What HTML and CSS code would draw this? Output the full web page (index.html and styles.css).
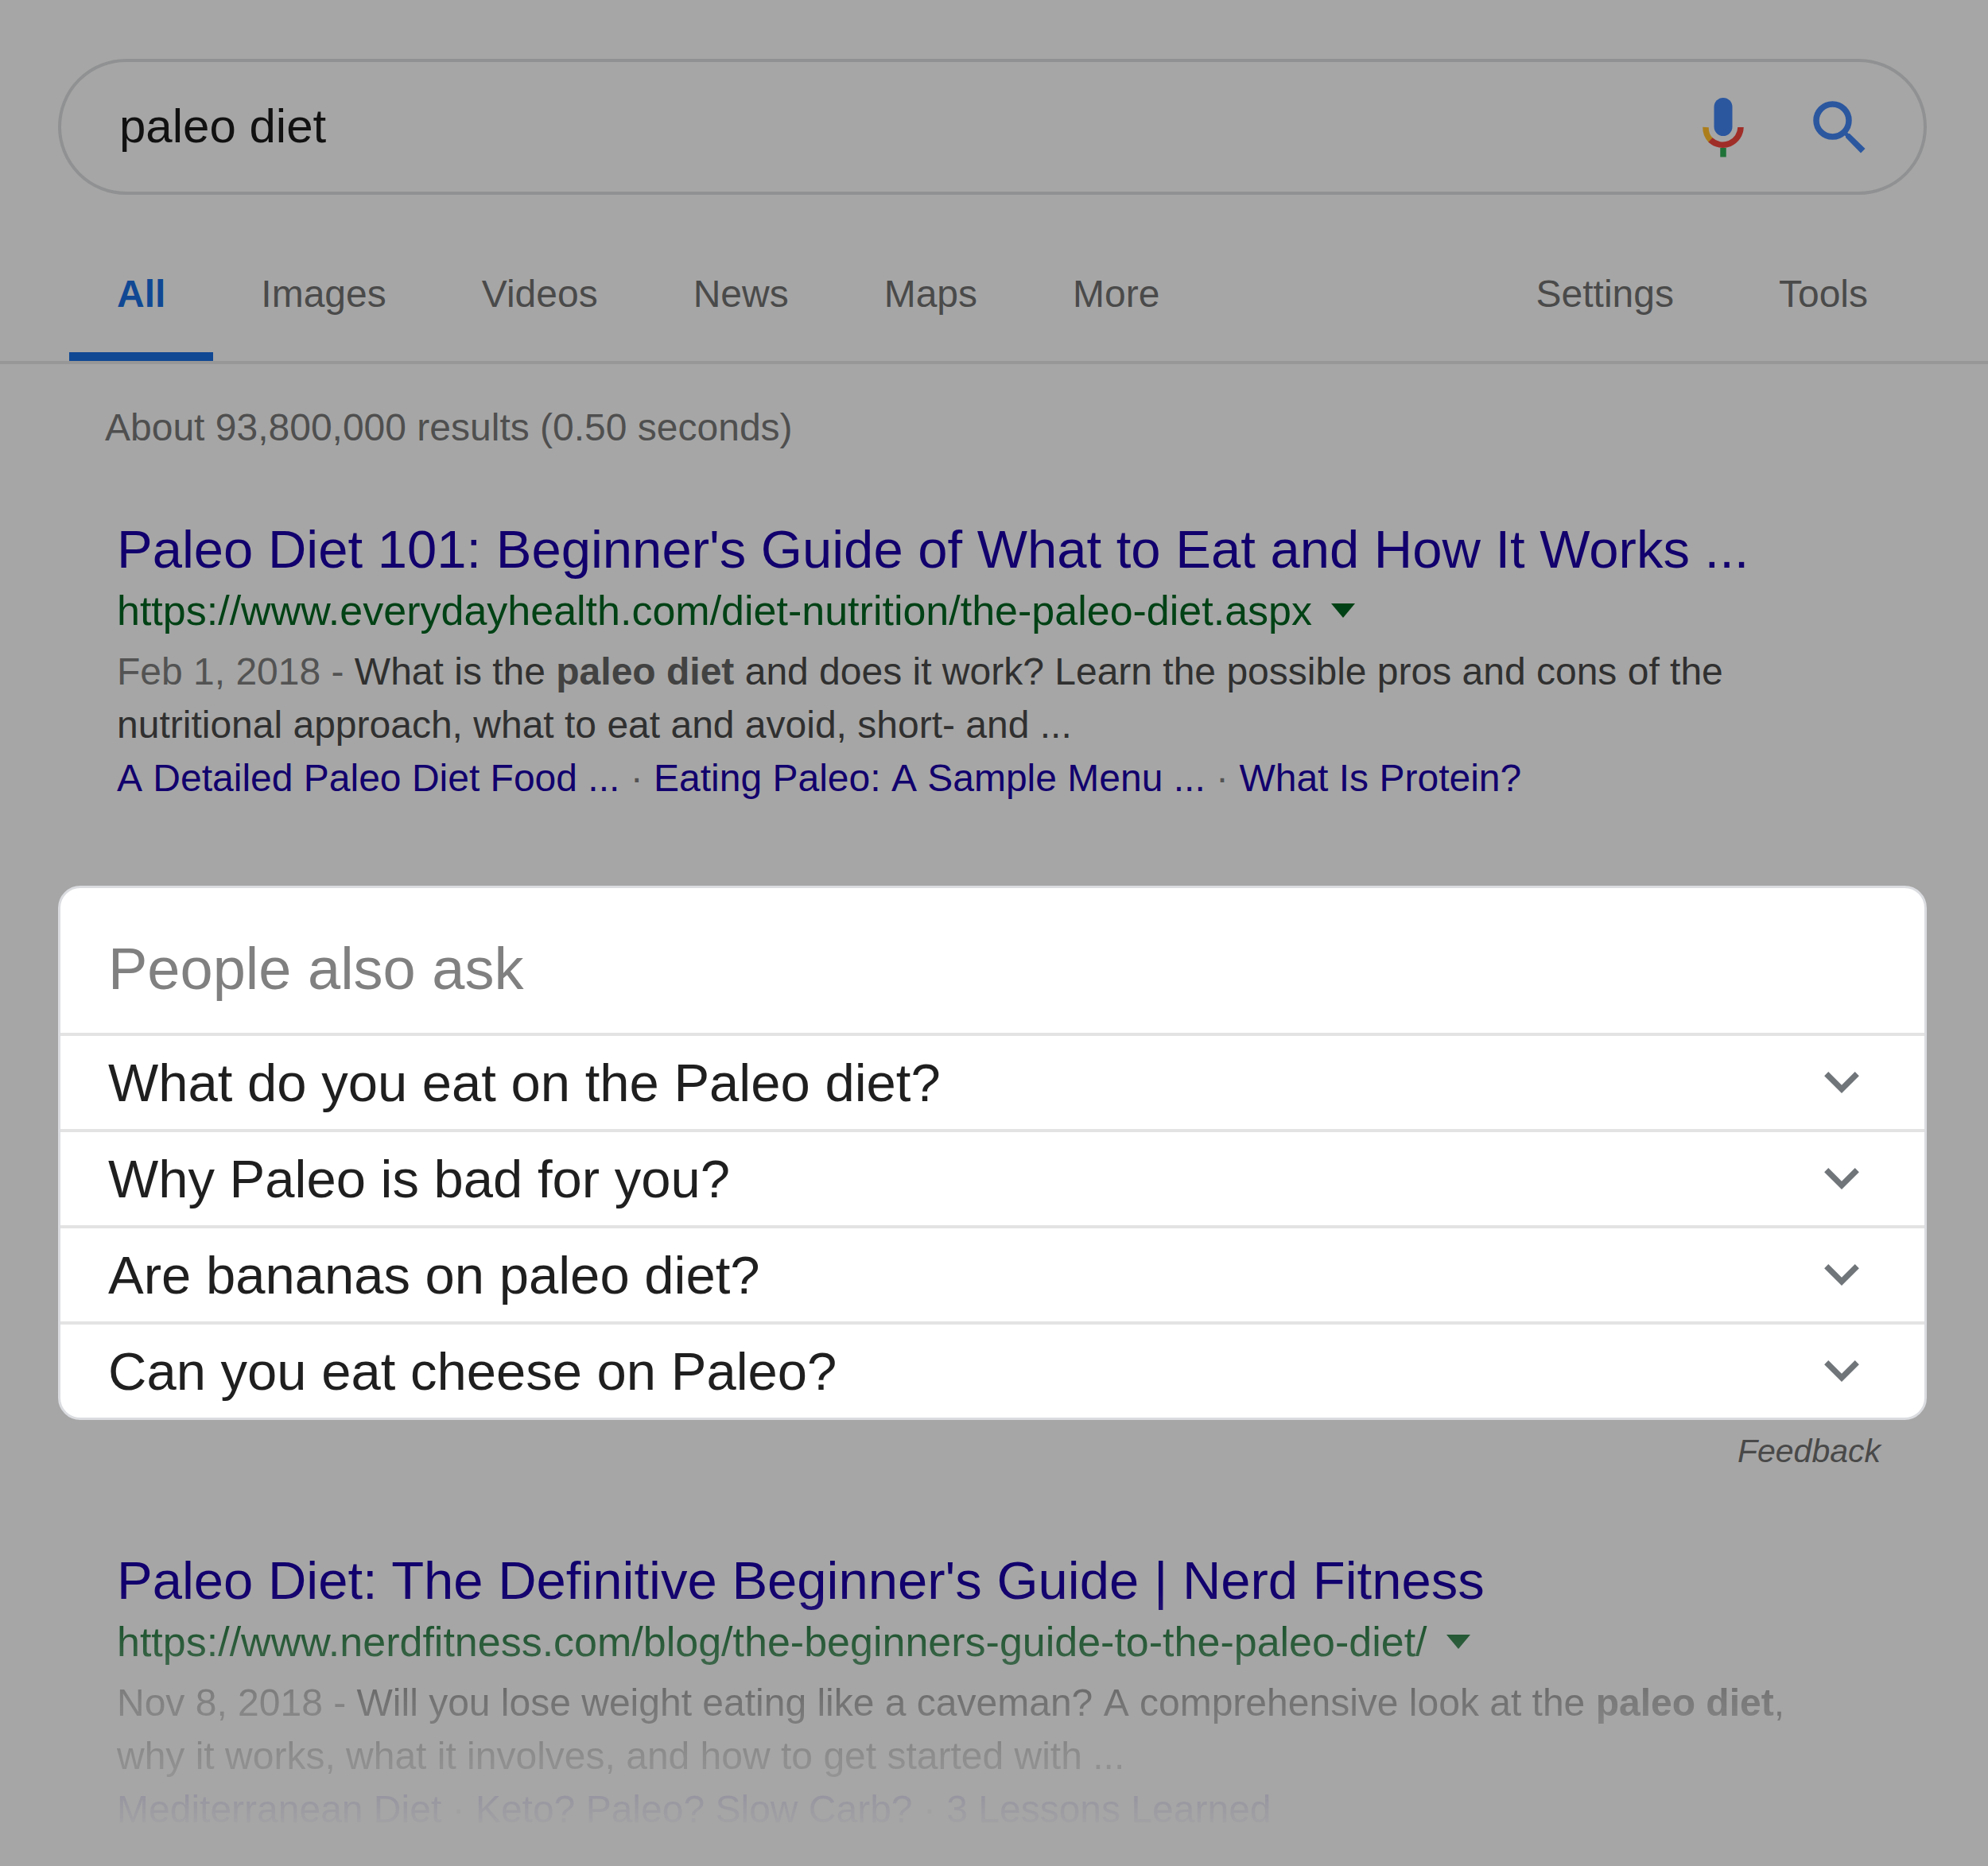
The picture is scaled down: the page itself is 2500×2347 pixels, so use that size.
FILE: index.html
```
<!DOCTYPE html>
<html lang="en">
<head>
  <meta charset="UTF-8">
  <title>paleo diet - Search</title>
  <meta name="viewport" content="width=device-width, initial-scale=1.0">
  <link rel="stylesheet" href="styles.css">
</head>
<body>

  <header>
    <form class="search-box">
      <input type="text" class="search-input" aria-label="Search" value="paleo diet">
      <button type="button" class="icon-btn" aria-label="Search by voice">
        <svg width="54" height="76" viewBox="0 0 54 76" fill="none">
          <rect x="15.5" y="1" width="23" height="48" rx="11.5" fill="#2b579f"/>
          <path d="M5 38a22 22 0 0 0 6.5 16.5" stroke="#ac7e1b" stroke-width="7.5"/>
          <path d="M11 54a22.5 22.5 0 0 0 38-16" stroke="#a02e28" stroke-width="7.5"/>
          <path d="M27 64v11.5" stroke="#207338" stroke-width="7.5"/>
        </svg>
      </button>
      <button type="submit" class="icon-btn" aria-label="Search">
        <svg width="66" height="66" viewBox="0 0 66 66" fill="none" stroke="#2b579f">
          <circle cx="24.5" cy="24.5" r="20.5" stroke-width="7.5"/>
          <path d="M38 38l4.500 4.500" stroke-width="5"/>
          <path d="M41 41h5l19.500 19-5.500 5.500L41 46z" fill="#2b579f" stroke="none"/>
        </svg>
      </button>
    </form>

    <nav class="tabs">
      <a href="#" class="tab active">All</a>
      <a href="#" class="tab">Images</a>
      <a href="#" class="tab">Videos</a>
      <a href="#" class="tab">News</a>
      <a href="#" class="tab">Maps</a>
      <a href="#" class="tab">More</a>
      <div class="tools">
        <a href="#">Settings</a>
        <a href="#">Tools</a>
      </div>
    </nav>
  </header>

  <main>
    <p class="stats">About 93,800,000 results (0.50 seconds)</p>

    <article class="result">
      <h3><a href="#">Paleo Diet 101: Beginner's Guide of What to Eat and How It Works ...</a></h3>
      <div class="url">
        <cite>https://www.everydayhealth.com/diet-nutrition/the-paleo-diet.aspx</cite>
        <button type="button" class="arrow" aria-label="More options">
          <svg width="30" height="18" viewBox="0 0 30 18"><path d="M0 0h30L15 18z" fill="currentColor"/></svg>
        </button>
      </div>
      <p class="snippet"><span class="date">Feb 1, 2018 - </span>What is the <b>paleo diet</b> and does it work? Learn the possible pros and cons of the nutritional approach, what to eat and avoid, short- and ...</p>
      <p class="sublinks"><a href="#">A Detailed Paleo Diet Food ...</a> · <a href="#">Eating Paleo: A Sample Menu ...</a> · <a href="#">What Is Protein?</a></p>
    </article>

    <section class="ask">
      <h2>People also ask</h2>
      <button type="button" class="question">What do you eat on the Paleo diet?
        <svg class="chevron" viewBox="6 8.590 12 7.410"><path d="M7.410 8.590L12 13.170l4.590-4.580L18 10l-6 6-6-6z"/></svg>
      </button>
      <button type="button" class="question">Why Paleo is bad for you?
        <svg class="chevron" viewBox="6 8.590 12 7.410"><path d="M7.410 8.590L12 13.170l4.590-4.580L18 10l-6 6-6-6z"/></svg>
      </button>
      <button type="button" class="question">Are bananas on paleo diet?
        <svg class="chevron" viewBox="6 8.590 12 7.410"><path d="M7.410 8.590L12 13.170l4.590-4.580L18 10l-6 6-6-6z"/></svg>
      </button>
      <button type="button" class="question">Can you eat cheese on Paleo?
        <svg class="chevron" viewBox="6 8.590 12 7.410"><path d="M7.410 8.590L12 13.170l4.590-4.580L18 10l-6 6-6-6z"/></svg>
      </button>
    </section>
    <a href="#" class="feedback">Feedback</a>

    <article class="result fade">
      <h3><a href="#">Paleo Diet: The Definitive Beginner's Guide | Nerd Fitness</a></h3>
      <div class="url">
        <cite>https://www.nerdfitness.com/blog/the-beginners-guide-to-the-paleo-diet/</cite>
        <button type="button" class="arrow" aria-label="More options">
          <svg width="30" height="18" viewBox="0 0 30 18"><path d="M0 0h30L15 18z" fill="currentColor"/></svg>
        </button>
      </div>
      <p class="snippet"><span class="date">Nov 8, 2018 - </span>Will you lose weight eating like a caveman? A comprehensive look at the <b>paleo diet</b>, why it works, what it involves, and how to get started with ...</p>
      <p class="sublinks"><a href="#">Mediterranean Diet</a> · <a href="#">Keto? Paleo? Slow Carb?</a> · <a href="#">3 Lessons Learned</a></p>
    </article>
  </main>

</body>
</html>
```
FILE: styles.css
```
* {
  box-sizing: border-box;
}

body {
  background: #a6a6a6;
  color: #303030;
  font-family: "Liberation Sans", Arial, sans-serif;
  font-size: 48px;
  margin: 0;
}

h2, h3, p {
  margin: 0;
  font-weight: normal;
}

a {
  color: inherit;
  text-decoration: none;
}

button {
  background: none;
  border: none;
  padding: 0;
  font-family: inherit;
  cursor: pointer;
}

svg {
  display: block;
}

/* search bar */
header {
  padding-top: 74px;
  border-bottom: 4px solid #979797;
}

.search-box {
  display: flex;
  align-items: center;
  height: 171px;
  margin: 0 77px 0 73px;
  padding: 0 73px;
  border: 4px solid #909192;
  border-radius: 86px;
}

.search-input {
  flex: 1;
  min-width: 0;
  padding: 0 0 2px;
  border: none;
  outline: none;
  background: none;
  color: #111;
  font-family: inherit;
  font-size: 60px;
}

.icon-btn {
  margin-left: 86px;
}

/* tabs */
.tabs {
  display: flex;
  margin-top: 95px;
  padding: 0 151px 0 87px;
  color: #4a4a4a;
  line-height: 60px;
}

.tab {
  padding: 0 60px 43px;
  border-bottom: 11px solid transparent;
}

.tab.active {
  color: #104894;
  border-color: #104894;
  font-weight: bold;
}

.tools {
  display: flex;
  gap: 132px;
  margin-left: auto;
}

.stats {
  margin: 50px 132px 81px;
  color: #4f4f4f;
  line-height: 60px;
}

/* results */
.result {
  max-width: 2300px;
  margin-left: 147px;
  padding-right: 147px;
}

.result h3 {
  color: #11006d;
  font-size: 67px;
  line-height: 84px;
}

.url {
  display: flex;
  align-items: center;
  gap: 24px;
  margin-bottom: 8px;
  color: #004215;
  font-size: 52px;
  line-height: 70px;
}

.url cite {
  font-style: normal;
}

.arrow {
  color: inherit;
}

.snippet, .sublinks {
  font-kerning: none;
  line-height: 67px;
}

.date {
  color: #535353;
}

.snippet b {
  color: #424242;
}

.sublinks {
  color: #535353;
}

.sublinks a {
  color: #11006d;
}

.fade {
  margin-top: 97px;
  -webkit-mask-image: linear-gradient(#000 14%, rgba(0,0,0,0.75) 33%, rgba(0,0,0,0.44) 53%, rgba(0,0,0,0.22) 71%, rgba(0,0,0,0.06) 91%, transparent);
  mask-image: linear-gradient(#000 14%, rgba(0,0,0,0.75) 33%, rgba(0,0,0,0.44) 53%, rgba(0,0,0,0.22) 71%, rgba(0,0,0,0.06) 91%, transparent);
}

/* people also ask */
.ask {
  margin: 102px 77px 0 73px;
  background: #fff;
  border: 3px solid #dadce0;
  border-radius: 28px;
  overflow: hidden;
}

.ask h2 {
  padding: 57px 60px 35px;
  color: #808080;
  font-size: 74px;
  line-height: 90px;
}

.question {
  display: flex;
  align-items: center;
  justify-content: space-between;
  width: 100%;
  padding: 0 82px 0 60px;
  border-top: 4px solid #e3e3e3;
  color: #1f1f1f;
  font-size: 67px;
  line-height: 117px;
  text-align: left;
}

.chevron {
  width: 44px;
  height: 27px;
  fill: #70757a;
}

.feedback {
  display: block;
  margin: 15px 135px 0 0;
  color: #494949;
  font-size: 41px;
  font-style: italic;
  line-height: 48px;
  text-align: right;
}
```
